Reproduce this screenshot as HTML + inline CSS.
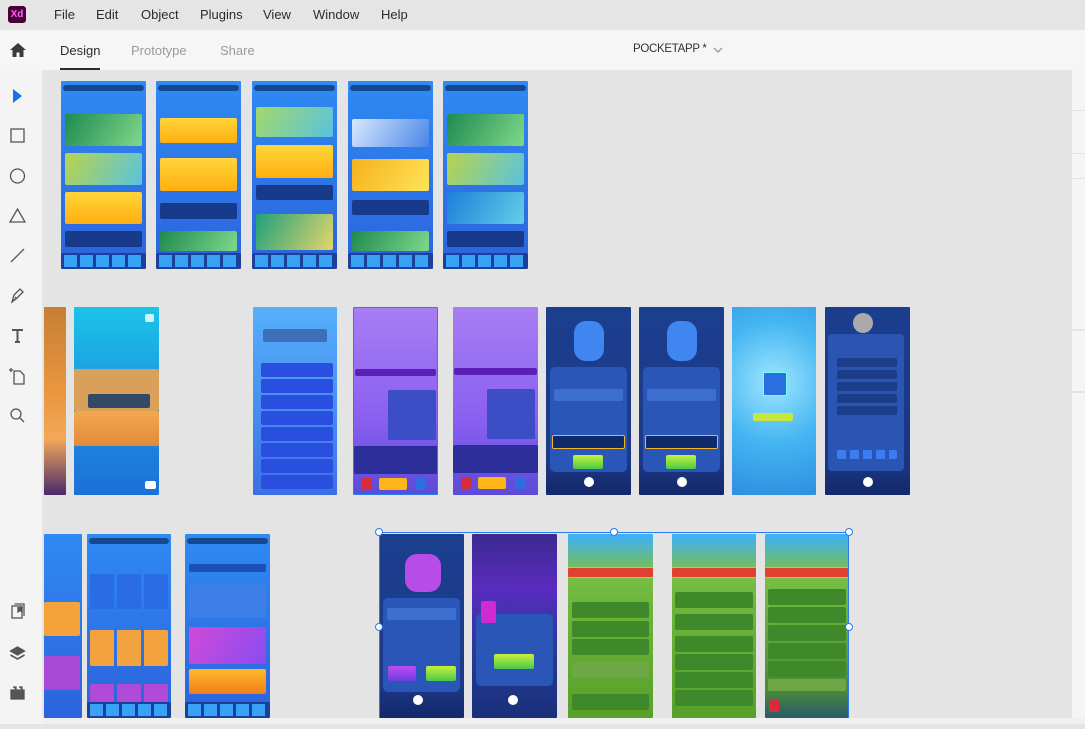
<!DOCTYPE html>
<html><head><meta charset="utf-8">
<style>
*{margin:0;padding:0;box-sizing:border-box}
body{width:1085px;height:724px;overflow:hidden;background:#e4e4e4;font-family:"Liberation Sans",sans-serif;position:relative}
.a{position:absolute}
.menu{left:0;top:0;width:1085px;height:30px;background:#e5e5e5}
.menu span{position:absolute;top:7px;font-size:13px;color:#2c2c2c}
.tabs{left:0;top:30px;width:1085px;height:40px;background:#f6f6f6}
.tabs span{position:absolute;top:13px;font-size:13px;color:#9a9a9a}
.tool{left:0;top:70px;width:42px;height:654px;background:#f4f4f4}
.rp{left:1072px;width:13px;background:#f5f5f5}
.bd{position:absolute;overflow:hidden;border-radius:1px}
.bd i{position:absolute;display:block;border-radius:2px}
.top{left:2px;right:2px;top:4px;height:6px;background:rgba(0,20,60,.55);border-radius:3px!important}
.nav{left:0;right:0;bottom:0;height:16px;background:#1c3f9a}
.nav:before{content:"";position:absolute;left:3px;right:3px;top:2px;height:12px;background:repeating-linear-gradient(90deg,#3aa2f5 0 13px,#1c3f9a 13px 16px)}
.h{position:absolute;width:8px;height:8px;border:1.5px solid #2a7bef;background:#fff;border-radius:50%}
</style></head><body>

<div class="a menu">
 <div class="a" style="left:8px;top:6px;width:18px;height:17px;background:#470137;border-radius:3px;color:#ff61f6;font-size:10px;font-weight:bold;text-align:center;line-height:17px">Xd</div>
 <span style="left:54px">File</span><span style="left:96px">Edit</span><span style="left:141px">Object</span><span style="left:200px">Plugins</span><span style="left:263px">View</span><span style="left:313px">Window</span><span style="left:381px">Help</span>
</div>
<div class="a tabs">
 <svg class="a" style="left:9px;top:12px" width="18" height="16" viewBox="0 0 18 16"><path d="M9 1L1 8h2.5v7h4v-4.5h3V15h4V8H17z" fill="#3a3a3a"/></svg>
 <span style="left:60px;color:#2c2c2c">Design</span>
 <div class="a" style="left:60px;top:38px;width:40px;height:2px;background:#2c2c2c"></div>
 <span style="left:131px">Prototype</span><span style="left:220px">Share</span>
 <span style="left:633px;color:#333;font-size:11.5px;letter-spacing:-0.3px">POCKETAPP *</span>
 <svg class="a" style="left:713px;top:17px" width="10" height="7"><path d="M1 1l4 4 4-4" stroke="#999" fill="none" stroke-width="1.3"/></svg>
</div>
<div class="a tool">
 <svg width="42" height="654" viewBox="0 70 42 654" fill="none" stroke="#555" stroke-width="1.3">
  <path d="M13 89l9 7-9 7z" fill="#1473e6" stroke="none"/>
  <rect x="11" y="129" width="13" height="13"/>
  <circle cx="17.5" cy="176" r="7"/>
  <path d="M17.5 209l-7.5 13h15z"/>
  <path d="M11 262l13-13"/>
  <path d="M12 302l2-7 6-6 3 3-6 6z M15 297l2 2 M12 302l3-3"/>
  <path d="M12 330h11 M17.5 330v12 M15 342h5" stroke-width="2"/>
  <path d="M11 368v4 M9 370h4 M14 371h6l4 4v9H14z"/>
  <circle cx="16" cy="414" r="5"/><path d="M20 418l4 4"/>
  <rect x="12" y="606" width="10" height="12"/><path d="M14.5 604h9.5v12" /><path d="M18 607v5l2-1.5 2 1.5v-5" fill="#555"/>
  <path d="M17.5 647l-7 4 7 4 7-4z" fill="#555"/><path d="M10.5 655l7 4 7-4" stroke-width="1.6"/>
  <path d="M11 690h13v9H11z M13 687h3v3 M19 687h3v3" fill="#555"/>
 </svg>
</div>
<div class="a rp" style="top:70px;height:40px"></div>
<div class="a rp" style="top:111px;height:42px"></div>
<div class="a rp" style="top:154px;height:24px"></div>
<div class="a rp" style="top:179px;height:150px"></div>
<div class="a rp" style="top:331px;height:60px"></div>
<div class="a rp" style="top:393px;height:325px"></div>
<div class="a" style="left:42px;top:718px;width:1043px;height:6px;background:#f0f0f0"></div>

<!-- Row 1 -->
<div class="bd" style="left:61px;top:81px;width:85px;height:188px;background:linear-gradient(#2f8af3,#2c63dc)">
 <i class="top"></i>
 <i style="left:4px;top:33px;width:77px;height:32px;background:linear-gradient(120deg,#1f8a4f,#7ed88b)"></i>
 <i style="left:4px;top:72px;width:77px;height:32px;background:linear-gradient(120deg,#b9d44a,#58c3e0)"></i>
 <i style="left:4px;top:111px;width:77px;height:32px;background:linear-gradient(#ffd63a,#ffae10)"></i>
 <i style="left:4px;top:150px;width:77px;height:16px;background:#173a8a"></i>
 <i class="nav"></i>
</div>
<div class="bd" style="left:156px;top:81px;width:85px;height:188px;background:linear-gradient(#2f8af3,#2c63dc)">
 <i class="top"></i>
 <i style="left:4px;top:37px;width:77px;height:25px;background:linear-gradient(#ffd63a,#ffae10)"></i>
 <i style="left:4px;top:77px;width:77px;height:33px;background:linear-gradient(#ffd63a,#ffae10)"></i>
 <i style="left:4px;top:122px;width:77px;height:16px;background:#173a8a"></i>
 <i style="left:4px;top:150px;width:77px;height:20px;background:linear-gradient(120deg,#1f8a4f,#7ed88b)"></i>
 <i class="nav"></i>
</div>
<div class="bd" style="left:252px;top:81px;width:85px;height:188px;background:linear-gradient(#2f8af3,#2c63dc)">
 <i class="top"></i>
 <i style="left:4px;top:26px;width:77px;height:30px;background:linear-gradient(120deg,#a3d86a,#58c3e0)"></i>
 <i style="left:4px;top:64px;width:77px;height:33px;background:linear-gradient(#ffd63a,#ffae10)"></i>
 <i style="left:4px;top:104px;width:77px;height:15px;background:#173a8a"></i>
 <i style="left:4px;top:133px;width:77px;height:36px;background:linear-gradient(120deg,#1fa07a,#e3d66b)"></i>
 <i class="nav"></i>
</div>
<div class="bd" style="left:348px;top:81px;width:85px;height:188px;background:linear-gradient(#2f8af3,#2c63dc)">
 <i class="top"></i>
 <i style="left:4px;top:38px;width:77px;height:28px;background:linear-gradient(120deg,#d8e8ff,#4a86e6)"></i>
 <i style="left:4px;top:78px;width:77px;height:32px;background:linear-gradient(120deg,#f5b21a,#ffe35a)"></i>
 <i style="left:4px;top:119px;width:77px;height:15px;background:#173a8a"></i>
 <i style="left:4px;top:150px;width:77px;height:20px;background:linear-gradient(120deg,#1f8a4f,#7ed88b)"></i>
 <i class="nav"></i>
</div>
<div class="bd" style="left:443px;top:81px;width:85px;height:188px;background:linear-gradient(#2f8af3,#2c63dc)">
 <i class="top"></i>
 <i style="left:4px;top:33px;width:77px;height:32px;background:linear-gradient(120deg,#1f8a4f,#7ed88b)"></i>
 <i style="left:4px;top:72px;width:77px;height:32px;background:linear-gradient(120deg,#b9d44a,#58c3e0)"></i>
 <i style="left:4px;top:111px;width:77px;height:32px;background:linear-gradient(120deg,#1d7fd9,#62cfe8)"></i>
 <i style="left:4px;top:150px;width:77px;height:16px;background:#173a8a"></i>
 <i class="nav"></i>
</div>

<!-- Row 2 -->
<div class="bd" style="left:44px;top:307px;width:22px;height:188px;background:linear-gradient(#c77e33,#e9963e 45%,#f2a858 70%,#4a2a6a)"></div>
<div class="bd" style="left:74px;top:307px;width:85px;height:188px;background:linear-gradient(#1bc4e8,#1e93e0 50%,#1b70d8)">
 <i style="left:0;top:62px;width:85px;height:42px;background:#d9a05a"></i>
 <i style="left:0;top:104px;width:85px;height:35px;background:linear-gradient(#f2a84e,#e38a3b)"></i>
 <i style="left:14px;top:87px;width:62px;height:14px;background:#324a66"></i>
 <i style="left:71px;top:7px;width:9px;height:8px;background:#fff;opacity:.8"></i>
 <i style="left:71px;top:174px;width:11px;height:8px;background:#fff"></i>
</div>
<div class="bd" style="left:253px;top:307px;width:84px;height:188px;background:linear-gradient(#56b0fb,#3a70e6)">
 <i style="left:10px;top:22px;width:64px;height:13px;background:#3c6fb8"></i>
 <i style="left:8px;top:56px;width:72px;height:14px;background:#2a4fe0"></i>
 <i style="left:8px;top:72px;width:72px;height:14px;background:#2a4fe0"></i>
 <i style="left:8px;top:88px;width:72px;height:14px;background:#2a4fe0"></i>
 <i style="left:8px;top:104px;width:72px;height:14px;background:#2a4fe0"></i>
 <i style="left:8px;top:120px;width:72px;height:14px;background:#2a4fe0"></i>
 <i style="left:8px;top:136px;width:72px;height:14px;background:#2a4fe0"></i>
 <i style="left:8px;top:152px;width:72px;height:14px;background:#2a4fe0"></i>
 <i style="left:8px;top:168px;width:72px;height:14px;background:#2a4fe0"></i>
</div>
<div class="bd" style="left:353px;top:307px;width:85px;height:188px;background:linear-gradient(#a77ef5,#8a5ff0 60%,#5b4bd6);border:1px solid #2a7bef">
 <i style="left:1px;top:61px;width:81px;height:7px;background:#5a1fb8"></i>
 <i style="left:34px;top:82px;width:48px;height:50px;background:#3b4ec6"></i>
 <i style="left:0;top:138px;width:85px;height:28px;background:#2c2f9a"></i>
 <i style="left:8px;top:170px;width:10px;height:12px;background:#d92b3a"></i>
 <i style="left:25px;top:170px;width:28px;height:12px;background:#ffb51a"></i>
 <i style="left:62px;top:170px;width:10px;height:12px;background:#2d6fe3"></i>
</div>
<div class="bd" style="left:453px;top:307px;width:85px;height:188px;background:linear-gradient(#a77ef5,#8a5ff0 60%,#5b4bd6)">
 <i style="left:1px;top:61px;width:83px;height:7px;background:#5a1fb8"></i>
 <i style="left:34px;top:82px;width:48px;height:50px;background:#3b4ec6"></i>
 <i style="left:0;top:138px;width:85px;height:28px;background:#2c2f9a"></i>
 <i style="left:8px;top:170px;width:10px;height:12px;background:#d92b3a"></i>
 <i style="left:25px;top:170px;width:28px;height:12px;background:#ffb51a"></i>
 <i style="left:62px;top:170px;width:10px;height:12px;background:#2d6fe3"></i>
</div>
<div class="bd" style="left:546px;top:307px;width:85px;height:188px;background:linear-gradient(#1c3e8f,#1d3a88 80%,#14286b)">
 <i style="left:4px;top:60px;width:77px;height:105px;background:#2a56b8;border-radius:5px"></i>
 <i style="left:28px;top:14px;width:30px;height:40px;background:#3f86f0;border-radius:12px"></i>
 <i style="left:8px;top:82px;width:69px;height:12px;background:#3d6fd0"></i>
 <i style="left:6px;top:128px;width:73px;height:14px;background:#0f2a6a;border:1px solid #f4b52a"></i>
 <i style="left:27px;top:148px;width:30px;height:14px;background:linear-gradient(#c7f23a,#4ac94a)"></i>
 <i style="left:38px;top:170px;width:10px;height:10px;background:#fff;border-radius:50%"></i>
</div>
<div class="bd" style="left:639px;top:307px;width:85px;height:188px;background:linear-gradient(#1c3e8f,#1d3a88 80%,#14286b)">
 <i style="left:4px;top:60px;width:77px;height:105px;background:#2a56b8;border-radius:5px"></i>
 <i style="left:28px;top:14px;width:30px;height:40px;background:#3f86f0;border-radius:12px"></i>
 <i style="left:8px;top:82px;width:69px;height:12px;background:#3d6fd0"></i>
 <i style="left:6px;top:128px;width:73px;height:14px;background:#0f2a6a;border:1px solid #f4b52a"></i>
 <i style="left:27px;top:148px;width:30px;height:14px;background:linear-gradient(#c7f23a,#4ac94a)"></i>
 <i style="left:38px;top:170px;width:10px;height:10px;background:#fff;border-radius:50%"></i>
</div>
<div class="bd" style="left:732px;top:307px;width:84px;height:188px;background:radial-gradient(circle at 50% 40%,#9fe6ff,#45b6f2 50%,#2e8ee0)">
 <i style="left:31px;top:65px;width:24px;height:24px;background:#2a6fe0;border:1px solid #7fe"></i>
 <i style="left:21px;top:106px;width:40px;height:8px;background:#c7e83a"></i>
</div>
<div class="bd" style="left:825px;top:307px;width:85px;height:188px;background:linear-gradient(#1c3e8f,#1a3580 85%,#14286b)">
 <i style="left:3px;top:27px;width:76px;height:137px;background:#2b55b2;border-radius:4px"></i>
 <i style="left:28px;top:6px;width:20px;height:20px;background:#aaa;border-radius:50%"></i>
 <i style="left:12px;top:51px;width:60px;height:9px;background:#1c3d8a"></i>
 <i style="left:12px;top:63px;width:60px;height:9px;background:#1c3d8a"></i>
 <i style="left:12px;top:75px;width:60px;height:9px;background:#1c3d8a"></i>
 <i style="left:12px;top:87px;width:60px;height:9px;background:#1c3d8a"></i>
 <i style="left:12px;top:99px;width:60px;height:9px;background:#1c3d8a"></i>
 <i style="left:12px;top:143px;width:60px;height:9px;background:repeating-linear-gradient(90deg,#3b7cf0 0 9px,#2b55b2 9px 13px)"></i>
 <i style="left:38px;top:170px;width:10px;height:10px;background:#fff;border-radius:50%"></i>
</div>

<!-- Row 3 -->
<div class="bd" style="left:44px;top:534px;width:38px;height:184px;background:linear-gradient(#2f8af3,#2c63dc)">
 <i style="left:0;top:68px;width:36px;height:34px;background:#f3a33a"></i>
 <i style="left:0;top:122px;width:36px;height:34px;background:#a64ad6"></i>
</div>
<div class="bd" style="left:87px;top:534px;width:84px;height:184px;background:linear-gradient(#2f8af3,#2c63dc)">
 <i class="top"></i>
 <i style="left:3px;top:40px;width:78px;height:35px;background:repeating-linear-gradient(90deg,#2a6be6 0 24px,transparent 24px 27px)"></i>
 <i style="left:3px;top:96px;width:78px;height:36px;background:repeating-linear-gradient(90deg,#f2a340 0 24px,transparent 24px 27px)"></i>
 <i style="left:3px;top:150px;width:78px;height:20px;background:repeating-linear-gradient(90deg,#b04ad8 0 24px,transparent 24px 27px)"></i>
 <i class="nav"></i>
</div>
<div class="bd" style="left:185px;top:534px;width:85px;height:184px;background:linear-gradient(#2f8af3,#2c63dc)">
 <i class="top"></i>
 <i style="left:4px;top:30px;width:77px;height:8px;background:#1c50b8"></i>
 <i style="left:4px;top:50px;width:77px;height:34px;background:#3c7fe8"></i>
 <i style="left:4px;top:93px;width:77px;height:37px;background:linear-gradient(120deg,#d04ad8,#8a4cf0)"></i>
 <i style="left:4px;top:135px;width:77px;height:25px;background:linear-gradient(#ffb82a,#f07f1a)"></i>
 <i class="nav"></i>
</div>
<div class="bd" style="left:379px;top:534px;width:85px;height:184px;background:linear-gradient(#1c3e8f,#1d3a88 80%,#14286b)">
 <i style="left:4px;top:64px;width:77px;height:94px;background:#2a56b8;border-radius:5px"></i>
 <i style="left:26px;top:20px;width:36px;height:38px;background:#b84ce8;border-radius:12px"></i>
 <i style="left:8px;top:74px;width:69px;height:12px;background:#3d6fd0"></i>
 <i style="left:9px;top:132px;width:28px;height:15px;background:linear-gradient(#c04cf0,#6a3ee0)"></i>
 <i style="left:47px;top:132px;width:30px;height:15px;background:linear-gradient(#c7f23a,#4ac94a)"></i>
 <i style="left:34px;top:161px;width:10px;height:10px;background:#fff;border-radius:50%"></i>
</div>
<div class="bd" style="left:472px;top:534px;width:85px;height:184px;background:linear-gradient(#3b2a8f,#5a2bbf 30%,#2a3a9a 60%,#18307a)">
 <i style="left:4px;top:80px;width:77px;height:72px;background:#2a56b8;border-radius:5px"></i>
 <i style="left:9px;top:67px;width:15px;height:22px;background:#d02bd0"></i>
 <i style="left:22px;top:120px;width:40px;height:15px;background:linear-gradient(#c7f23a,#4ac94a)"></i>
 <i style="left:36px;top:161px;width:10px;height:10px;background:#fff;border-radius:50%"></i>
</div>
<div class="bd" style="left:568px;top:534px;width:85px;height:184px;background:linear-gradient(#3cb0ff,#7ac04a 20%,#6db43a 40%,#57a02a)">
 <i style="left:0;top:33px;width:85px;height:11px;background:#e04030;border-top:1px solid #ffb51a;border-bottom:1px solid #ffb51a"></i>
 <i style="left:4px;top:68px;width:77px;height:16px;background:#3e8a2a"></i>
 <i style="left:4px;top:87px;width:77px;height:16px;background:#3e8a2a"></i>
 <i style="left:4px;top:105px;width:77px;height:16px;background:#3e8a2a"></i>
 <i style="left:4px;top:128px;width:77px;height:16px;background:#6da844"></i>
 <i style="left:4px;top:160px;width:77px;height:16px;background:#3e8a2a"></i>
</div>
<div class="bd" style="left:672px;top:534px;width:84px;height:184px;background:linear-gradient(#3cb0ff,#7ac04a 20%,#6db43a 40%,#57a02a)">
 <i style="left:0;top:33px;width:84px;height:11px;background:#e04030;border-top:1px solid #ffb51a;border-bottom:1px solid #ffb51a"></i>
 <i style="left:3px;top:58px;width:78px;height:16px;background:#3e8a2a"></i>
 <i style="left:3px;top:80px;width:78px;height:16px;background:#3e8a2a"></i>
 <i style="left:3px;top:102px;width:78px;height:16px;background:#3e8a2a"></i>
 <i style="left:3px;top:120px;width:78px;height:16px;background:#3e8a2a"></i>
 <i style="left:3px;top:138px;width:78px;height:16px;background:#3e8a2a"></i>
 <i style="left:3px;top:156px;width:78px;height:16px;background:#3e8a2a"></i>
</div>
<div class="bd" style="left:765px;top:534px;width:84px;height:184px;background:linear-gradient(#3cb0ff,#7ac04a 20%,#6db43a 40%,#4a8a3a 85%,#2a5a6a)">
 <i style="left:0;top:33px;width:84px;height:11px;background:#e04030;border-top:1px solid #ffb51a;border-bottom:1px solid #ffb51a"></i>
 <i style="left:3px;top:55px;width:78px;height:16px;background:#3e8a2a"></i>
 <i style="left:3px;top:73px;width:78px;height:16px;background:#3e8a2a"></i>
 <i style="left:3px;top:91px;width:78px;height:16px;background:#3e8a2a"></i>
 <i style="left:3px;top:109px;width:78px;height:16px;background:#3e8a2a"></i>
 <i style="left:3px;top:127px;width:78px;height:16px;background:#3e8a2a"></i>
 <i style="left:3px;top:145px;width:78px;height:12px;background:#6da844"></i>
 <i style="left:4px;top:166px;width:10px;height:12px;background:#d92b3a"></i>
</div>

<!-- selection -->
<div class="a" style="left:379px;top:532px;width:470px;height:186px;border:1px solid #2a7bef;border-bottom:none"></div>
<div class="h" style="left:375px;top:528px"></div>
<div class="h" style="left:610px;top:528px"></div>
<div class="h" style="left:845px;top:528px"></div>
<div class="h" style="left:375px;top:623px"></div>
<div class="h" style="left:845px;top:623px"></div>
</body></html>
